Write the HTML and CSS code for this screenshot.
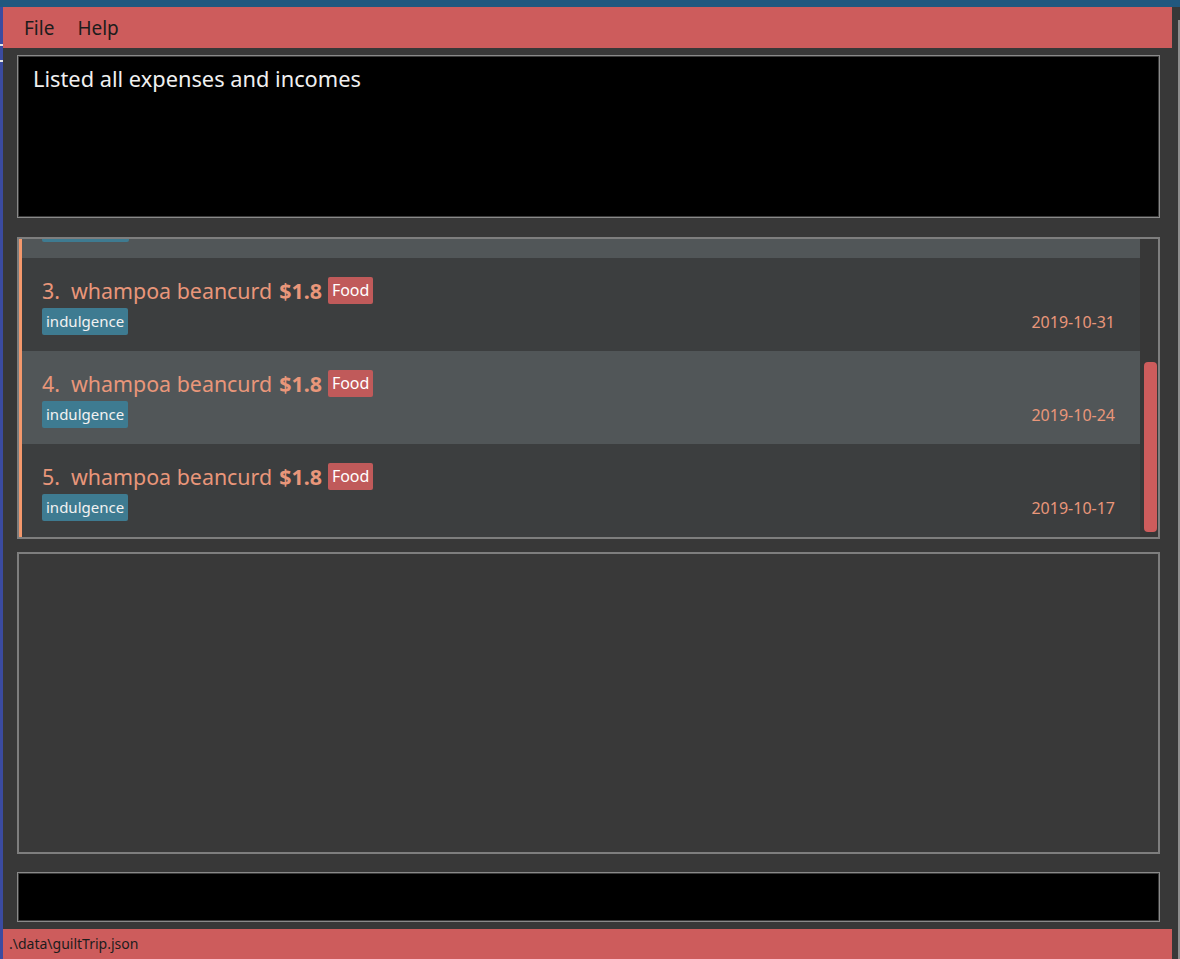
FILE: index.html
```html
<!DOCTYPE html>
<html lang="en">
<head>
<meta charset="utf-8">
<title>GuiltTrip</title>
<link rel="stylesheet" href="styles.css">
</head>
<body>
<div class="titlestrip"></div>
<div class="desktop">
  <div class="leftedge"><span class="tick tick-a"></span><span class="tick tick-b"></span></div>
  <div class="window">
    <div class="menubar"><span class="menu">File</span><span class="menu">Help</span></div>
    <div class="content">
      <div class="result">Listed all expenses and incomes</div>
      <div class="listpanel">
        <div class="listview">
          <div class="rows">
            <div class="row odd scrolled-off">
              <div class="meta"><span class="tag tag-stub"></span></div>
            </div>
            <div class="row even">
              <div class="title"><span class="idx">3.</span><span class="name">whampoa beancurd</span><span class="amount">$1.8</span><span class="cat">Food</span></div>
              <div class="meta"><span class="tag">indulgence</span><span class="date">2019-10-31</span></div>
            </div>
            <div class="row odd">
              <div class="title"><span class="idx">4.</span><span class="name">whampoa beancurd</span><span class="amount">$1.8</span><span class="cat">Food</span></div>
              <div class="meta"><span class="tag">indulgence</span><span class="date">2019-10-24</span></div>
            </div>
            <div class="row even">
              <div class="title"><span class="idx">5.</span><span class="name">whampoa beancurd</span><span class="amount">$1.8</span><span class="cat">Food</span></div>
              <div class="meta"><span class="tag">indulgence</span><span class="date">2019-10-17</span></div>
            </div>
          </div>
        </div>
        <div class="scrollbar"><div class="thumb"></div></div>
      </div>
      <div class="emptypanel"></div>
      <div class="command"></div>
    </div>
    <div class="statusbar">.\data\guiltTrip.json</div>
  </div>
  <div class="rightedge"><div class="otherwin"></div></div>
</div>
</body>
</html>
```

FILE: styles.css
```css
* { box-sizing: border-box; }

html, body {
  margin: 0;
  padding: 0;
}

body {
  width: 1180px;
  height: 959px;
  overflow: hidden;
  background: #383838;
  font-family: "Noto Sans", "Open Sans", sans-serif;
}

.titlestrip {
  height: 7px;
  background: #21587f;
}

.desktop {
  display: flex;
  height: 952px;
}

.leftedge {
  width: 3px;
  background: #3b4ba0;
  display: flex;
  flex-direction: column;
}

.tick {
  display: block;
  height: 2px;
  background: #e6e6e6;
}

.tick-a { margin-top: 37px; }
.tick-b { margin-top: 14px; }

.window {
  width: 1169px;
  display: flex;
  flex-direction: column;
}

.menubar {
  height: 41px;
  background: #cd5c5c;
  display: flex;
  align-items: center;
  padding-left: 21px;
  gap: 23px;
  font-size: 19px;
  color: #1c1c1c;
}

.content {
  flex: 1;
  display: flex;
  flex-direction: column;
  padding: 7px 12px 7px 14px;
}

.result {
  height: 163px;
  background: #000;
  border: 1px solid #8a8a8a;
  box-shadow: inset 0 0 0 1px #3a3a3a;
  color: #f0f0f0;
  font-size: 21.8px;
  padding: 8px 15px;
}

.listpanel {
  margin-top: 19px;
  height: 302px;
  border: 2px solid #7e7e7e;
  display: flex;
  overflow: hidden;
}

.listview {
  flex: 1;
  overflow: hidden;
}

.rows {
  display: flex;
  flex-direction: column;
}

.row {
  height: 93px;
  flex: none;
  border-left: 3px solid #f4986c;
  padding: 19px 25px 0 20px;
  display: flex;
  flex-direction: column;
}

.row.even { background: #3c3e3f; }
.row.odd { background: #515658; }

.row.scrolled-off {
  height: 19px;
  padding-top: 0;
  justify-content: flex-end;
  overflow: hidden;
}

.row.scrolled-off .meta { margin-bottom: 16px; }

.title {
  display: flex;
  align-items: center;
  height: 27px;
  color: #e9967a;
  font-size: 21.4px;
  white-space: pre;
}

.idx { margin-right: 11px; }
.name { margin-right: 7px; }
.amount { font-weight: bold; margin-right: 6px; }

.cat {
  background: #c05a5a;
  color: #fff;
  font-size: 16px;
  height: 27px;
  line-height: 27px;
  padding: 0 4px;
  border-radius: 2px;
}

.meta {
  margin-top: 4px;
  display: flex;
  justify-content: space-between;
  align-items: center;
  flex: none;
}

.tag {
  background: #3e7b91;
  color: #f2f2f2;
  font-size: 15px;
  height: 27px;
  line-height: 27px;
  padding: 0 4px;
  border-radius: 2px;
}

.tag-stub {
  width: 87px;
}

.date {
  color: #e9967a;
  font-size: 16px;
}

.scrollbar {
  width: 18px;
  background: #373737;
  padding-left: 4px;
}

.thumb {
  width: 13px;
  height: 170px;
  margin-top: 123px;
  background: #cd5c5c;
  border-radius: 4px;
}

.emptypanel {
  margin-top: 13px;
  height: 302px;
  border: 2px solid #7e7e7e;
  background: #393939;
}

.command {
  margin-top: 18px;
  height: 50px;
  background: #000;
  border: 1px solid #8a8a8a;
  box-shadow: inset 0 0 0 1px #3a3a3a;
}

.statusbar {
  height: 30px;
  background: #cd5c5c;
  color: #1c1c1c;
  font-size: 14px;
  line-height: 30px;
  padding-left: 6px;
}

.rightedge {
  width: 8px;
  display: flex;
  justify-content: flex-end;
}

.otherwin {
  width: 2px;
  margin-top: 13px;
  background: #8e8e8e;
}
```
